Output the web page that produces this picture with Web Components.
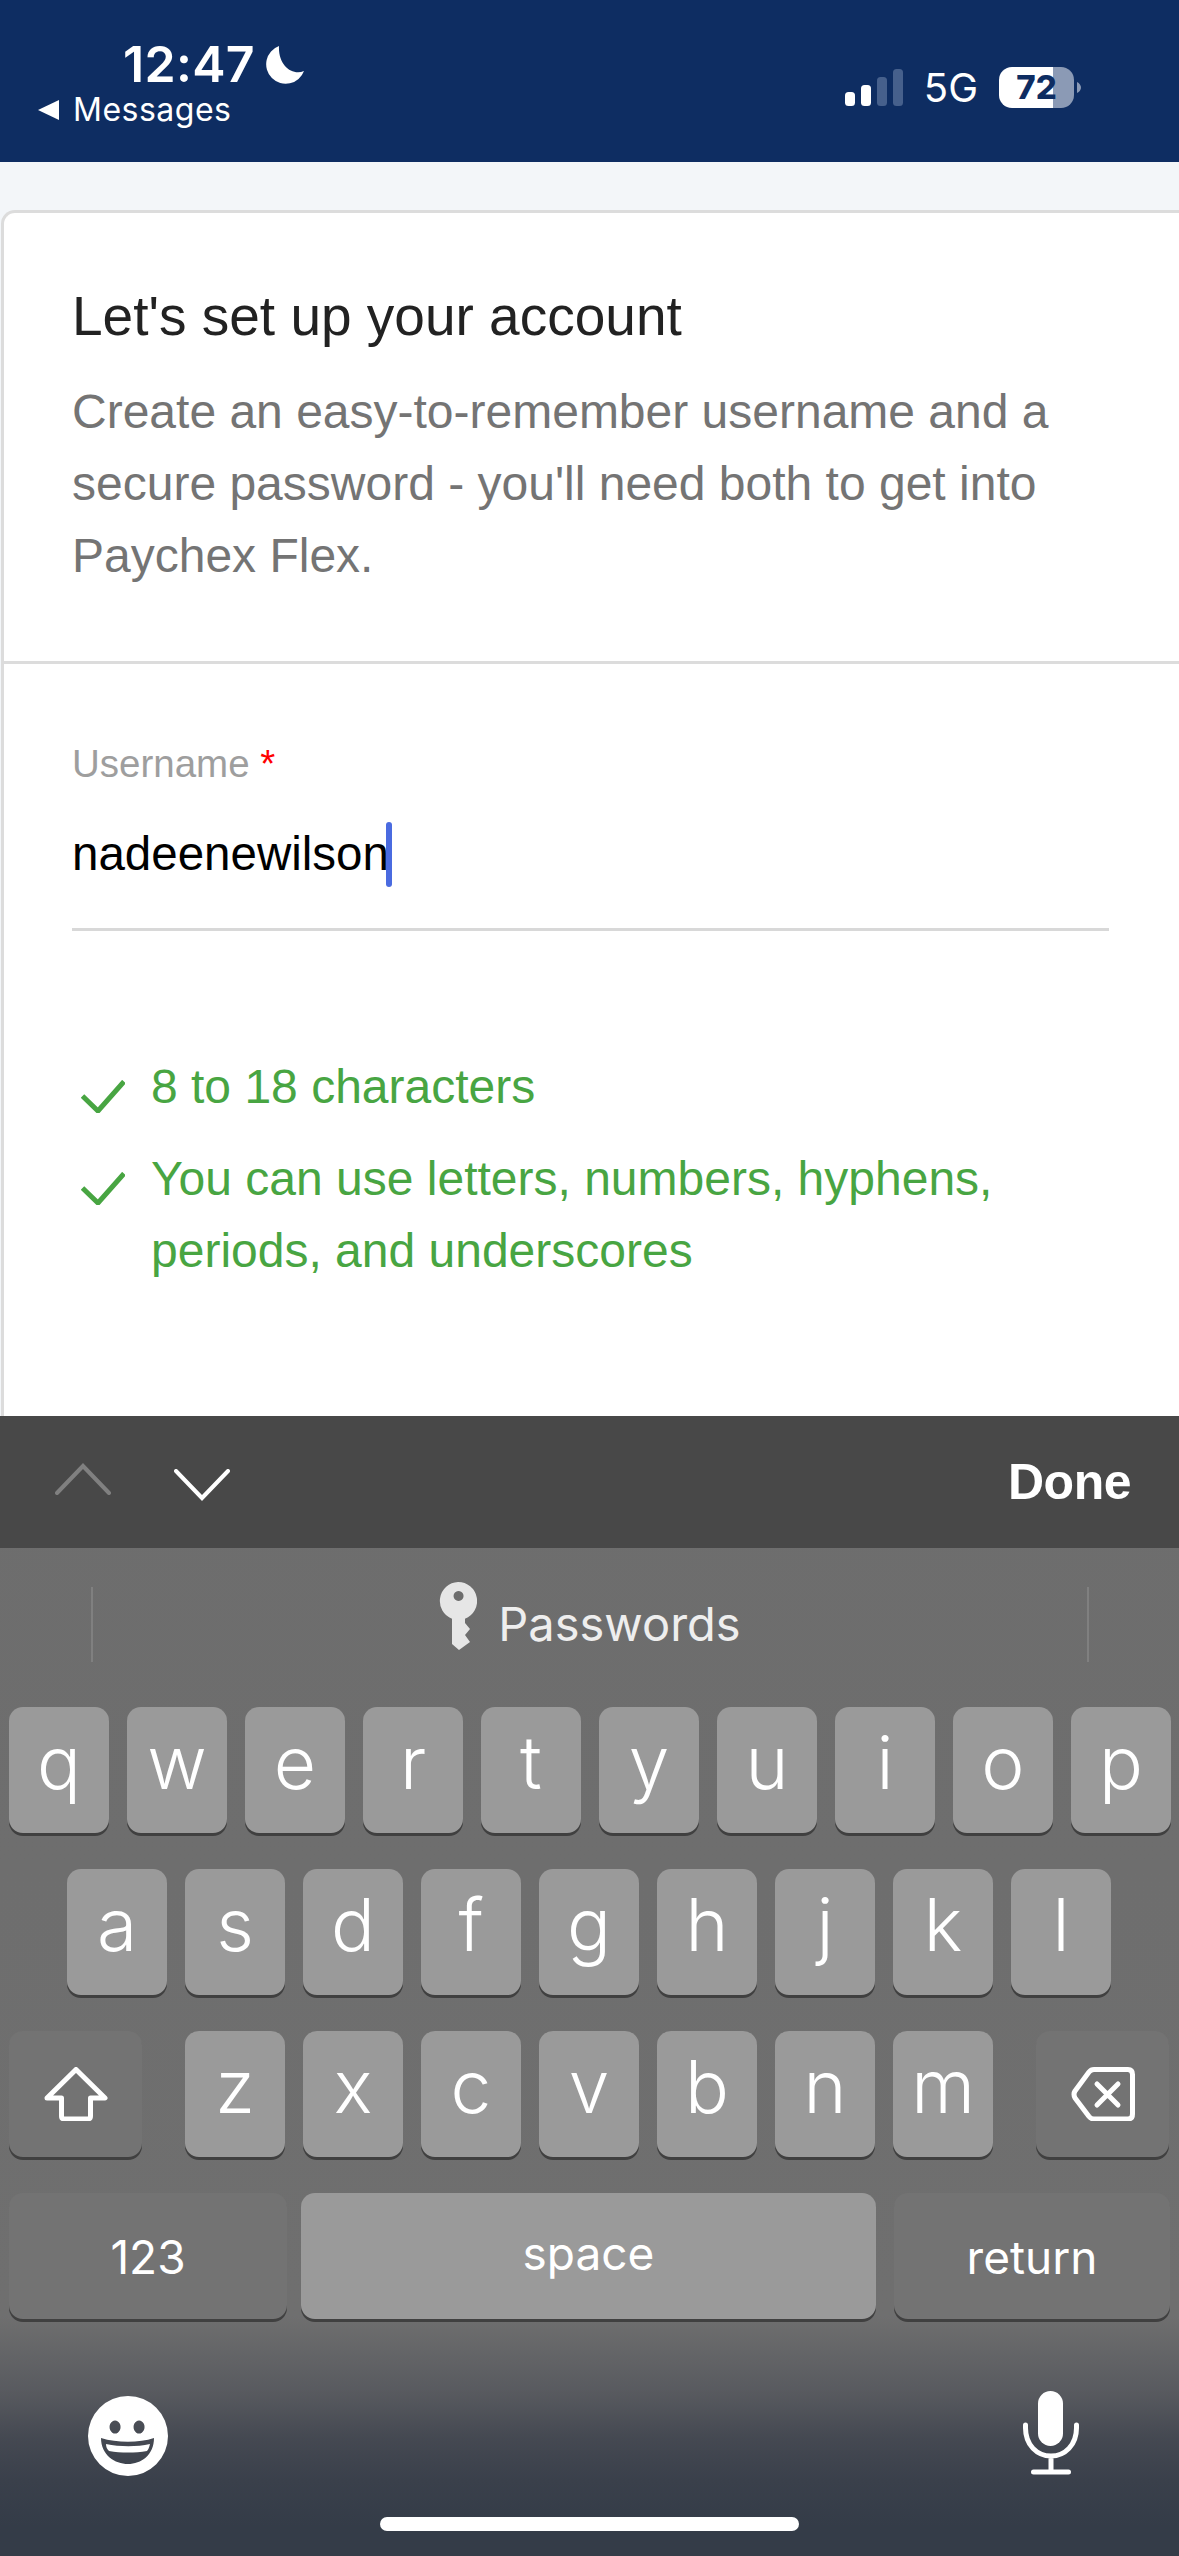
<!DOCTYPE html>
<html>
<head>
<meta charset="utf-8">
<style>
  html, body { margin: 0; padding: 0; }
  body { width: 1179px; height: 2556px; overflow: hidden; font-family: "Liberation Sans", Arial, sans-serif; display: flex; flex-direction: column; background: #f3f6f9; }
</style>
</head>
<body>
<status-bar></status-bar>
<account-card>
  <rule-item>8 to 18 characters</rule-item>
  <rule-item>You can use letters, numbers, hyphens, periods, and underscores</rule-item>
</account-card>
<key-board></key-board>

<script>
class StatusBar extends HTMLElement {
  constructor() {
    super();
    this.shadowDOM = this.attachShadow({mode: 'open'});
    this.shadowDOM.innerHTML = `
      <style>
        :host { display: flex; justify-content: space-between; flex: none; height: 162px; background: #0e2d62; color: #fff; font-family: Inter, sans-serif; }
        .left { padding: 39px 0 0 38px; }
        .time { display: flex; align-items: center; gap: 11px; padding-left: 85px; font-size: 50px; line-height: 50px; font-weight: 600; letter-spacing: 0.3px; }
        .back { display: flex; align-items: center; gap: 14px; margin-top: 3px; font-size: 32px; line-height: 36px; letter-spacing: 0.5px; }
        .right { display: flex; align-items: center; padding: 27px 98px 0 0; height: 60px; margin-top: 30px; gap: 21px; }
        .net { font-size: 40px; }
        .batt { display: block; width: 75px; height: 41px; border-radius: 13px; overflow: hidden; background: linear-gradient(90deg, #fff 0 54px, #8b9ab5 54px); color: #0e2d62; font-size: 33px; font-weight: 800; line-height: 41px; text-align: center; }
        .wrap { display: flex; align-items: center; gap: 3px; }
      </style>
      <div class="left">
        <div class="time">12:47
          <svg width="38" height="39" viewBox="0 0 38 39"><path d="M13 1A19.5 19.5 0 1 0 38 26C26 31 12 20 13 1Z" fill="#fff"/></svg>
        </div>
        <div class="back">
          <svg width="21" height="20" viewBox="0 0 21 20"><path d="M21 0V20L0 10Z" fill="#fff"/></svg>
          <span>Messages</span>
        </div>
      </div>
      <div class="right">
        <svg width="58" height="37" viewBox="0 0 58 37">
          <rect x="0" y="23" width="10" height="14" rx="3.5" fill="#fff"/>
          <rect x="16" y="16" width="10" height="21" rx="3.5" fill="#fff"/>
          <rect x="32" y="8" width="10" height="29" rx="3.5" fill="#46608c"/>
          <rect x="48" y="0" width="10" height="37" rx="3.5" fill="#46608c"/>
        </svg>
        <span class="net">5G</span>
        <span class="wrap">
          <span class="batt">72</span>
          <svg width="4" height="11" viewBox="0 0 4 11"><path d="M0 0C2.500 1 4 3.500 4 5.500S2.500 10 0 11Z" fill="#8b9ab5"/></svg>
        </span>
      </div>
    `;
  }
}

class AccountCard extends HTMLElement {
  constructor() {
    super();
    this.shadowDOM = this.attachShadow({mode: 'open'});
    this.shadowDOM.innerHTML = `
      <style>
        :host { display: block; flex: 1; min-height: 0; overflow: hidden; padding: 48px 0 0 1px; font-family: "Liberation Sans", Arial, sans-serif; }
        .card { box-sizing: border-box; height: 1400px; background: #fff; border: 3px solid #dcdcdc; border-right: 0; border-top-left-radius: 14px; }
        .head { height: 451px; box-sizing: border-box; padding: 73px 68px 0; border-bottom: 3px solid #dcdcdc; }
        h1 { margin: 0; font-size: 55px; line-height: 60px; font-weight: 400; color: #222; }
        p { margin: 30px 0 0; font-size: 48px; line-height: 72px; color: #747474; }
        .form { padding: 78px 70px 0 68px; }
        .lab { font-size: 38.500px; line-height: 44px; color: #9e9e9e; }
        .lab b { color: #f00; font-weight: 400; }
        .input { display: flex; align-items: center; height: 60px; margin-top: 38px; font-size: 47.500px; line-height: 60px; color: #000; }
        .caret { width: 6px; height: 65px; margin-left: -3px; border-radius: 3px; background: #4a6be0; }
        .line { height: 3px; margin-top: 44px; background: #d8d8d8; }
        .rules { display: flex; flex-direction: column; gap: 20px; margin-top: 120px; }
      </style>
      <div class="card">
        <div class="head">
          <h1>Let's set up your account</h1>
          <p>Create an easy-to-remember username and a secure password - you'll need both to get into Paychex Flex.</p>
        </div>
        <div class="form">
          <div class="lab">Username <b>*</b></div>
          <div class="input"><span>nadeenewilson</span><span class="caret"></span></div>
          <div class="line"></div>
          <div class="rules"><slot></slot></div>
        </div>
      </div>
    `;
  }
}

class RuleItem extends HTMLElement {
  constructor() {
    super();
    this.shadowDOM = this.attachShadow({mode: 'open'});
    this.shadowDOM.innerHTML = `
      <style>
        :host { display: flex; gap: 26px; color: #48a542; font-size: 48px; line-height: 72px; font-family: "Liberation Sans", Arial, sans-serif; }
        svg { flex: none; margin: 29px 0 0 9px; }
        div { width: 880px; }
      </style>
      <svg width="44" height="33" viewBox="0 0 44 33"><path d="M1.500 16L17 31L43 1.500" fill="none" stroke="#48a542" stroke-width="5"/></svg>
      <div><slot></slot></div>
    `;
  }
}

class KbKey extends HTMLElement {
  constructor() {
    super();
    this.shadowDOM = this.attachShadow({mode: 'open'});
    this.shadowDOM.innerHTML = `
      <style>
        :host { display: flex; align-items: center; justify-content: center; box-sizing: border-box; flex: none; width: 100px; height: 126px; padding-bottom: 16px; border-radius: 14px; background: #9a9a9a; box-shadow: 0 3px 0 #404040; color: #fff; font: 300 73px/1 Inter, sans-serif; }
        :host([dark]) { background: #737373; padding-bottom: 0; }
        :host([word]) { font: 400 46px/1 Inter, sans-serif; padding: 1px 0 0; }
      </style>
      <slot></slot>
    `;
  }
}

class KeyBoard extends HTMLElement {
  constructor() {
    super();
    this.shadowDOM = this.attachShadow({mode: 'open'});
    const row = s => [...s].map(c => `<kb-key>${c}</kb-key>`).join('');
    this.shadowDOM.innerHTML = `
      <style>
        :host { display: block; flex: none; height: 1140px; font-family: Inter, sans-serif; color: #fff; background: linear-gradient(#6d6d6d 0, #6f6f6f 900px, #585a5f 976px, #454952 1021px, #3a404b 1065px, #343c48 1110px); }
        .bar { display: flex; align-items: center; justify-content: space-between; box-sizing: border-box; height: 132px; padding: 0 48px 0 55px; background: #484848; font-family: "Liberation Sans", Arial, sans-serif; }
        .arrows { display: flex; gap: 63px; }
        .arrows svg:last-child { margin-top: 6px; }
        .done { font-size: 50px; font-weight: 700; letter-spacing: -0.5px; }
        .sug { display: flex; align-items: center; justify-content: space-between; box-sizing: border-box; height: 159px; padding: 0 90px 6px 91px; color: #eee; }
        .sep { width: 2px; height: 75px; background: #808080; }
        .pw { display: flex; align-items: flex-start; gap: 21px; margin-bottom: 18px; font-size: 47px; line-height: 52px; }
        .pw span { margin-top: 16px; }
        .rows { display: flex; flex-direction: column; gap: 36px; padding: 0 9px; }
        .row { display: flex; gap: 18px; }
        .r2 { padding-left: 58px; }
        .sh { width: 133px; margin-right: 25px; }
        .bs { width: 133px; margin-left: 25px; }
        .n { width: 278px; margin-right: -4px; }
        .sp { width: 575px; padding: 0 0 6px; }
        .rt { width: 276px; }
        .bot { display: flex; justify-content: space-between; align-items: flex-start; padding: 76px 100px 0 87px; }
        .mic { margin-top: -4px; }
        .home { width: 419px; height: 14px; margin: 40px auto 0; border-radius: 7px; background: #fff; }
      </style>
      <div class="bar">
        <div class="arrows">
          <svg width="56" height="32" viewBox="0 0 56 32"><path d="M2 30L28 3L54 30" fill="none" stroke="#808080" stroke-width="4" stroke-linecap="round"/></svg>
          <svg width="56" height="32" viewBox="0 0 56 32"><path d="M2 2L28 29L54 2" fill="none" stroke="#fff" stroke-width="4" stroke-linecap="round"/></svg>
        </div>
        <span class="done">Done</span>
      </div>
      <div class="sug">
        <span class="sep"></span>
        <span class="pw">
          <svg width="38" height="68" viewBox="0 0 38 68"><path fill-rule="evenodd" d="M19 0A19 19 0 0 1 26 36.700V41L31 47L26 53L31 60L20 68L13 62V36.700A19 19 0 0 1 19 0ZM19.500 9A5 5 0 1 0 19.600 9Z" fill="#e6e6e6"/></svg>
          <span>Passwords</span>
        </span>
        <span class="sep"></span>
      </div>
      <div class="rows">
        <div class="row">${row('qwertyuiop')}</div>
        <div class="row r2">${row('asdfghjkl')}</div>
        <div class="row">
          <kb-key dark class="sh">
            <svg width="64" height="54" viewBox="0 0 64 54"><path d="M32 2.500L61 31H46.500V49Q46.500 52 43.500 52H20.500Q17.500 52 17.500 49V31H3Z" fill="none" stroke="#fff" stroke-width="5" stroke-linejoin="round"/></svg>
          </kb-key>
          ${row('zxcvbnm')}
          <kb-key dark class="bs">
            <svg width="64" height="54" viewBox="0 0 64 54"><path d="M23 2.500H57Q61.500 2.500 61.500 7.500V47Q61.500 52 57 52H23Q20 52 18 49.500L4 31Q2 27 4 24L18 5Q20 2.500 23 2.500Z" fill="none" stroke="#fff" stroke-width="5" stroke-linejoin="round"/><path d="M26 17L47 38M47 17L26 38" stroke="#fff" stroke-width="5" stroke-linecap="round"/></svg>
          </kb-key>
        </div>
        <div class="row">
          <kb-key dark word class="n">123</kb-key>
          <kb-key word class="sp">space</kb-key>
          <kb-key dark word class="rt">return</kb-key>
        </div>
      </div>
      <div class="bot">
        <svg width="82" height="82" viewBox="0 0 82 82"><path fill-rule="evenodd" d="M41 1A40 40 0 1 1 41 81A40 40 0 1 1 41 1ZM28 25.500A5.500 6.500 0 1 0 28.100 25.500ZM52 25.500A5.500 6.500 0 1 0 52.100 25.500ZM14 43C30 48 52 48 67 43C67 60 54 69 41 69C28 69 14 60 14 43ZM19 49C33 52 50 52 63 49C62 53 61 55 60 56C48 58 34 58 22 56C20 54 19 52 19 49Z" fill="#fff"/></svg>
        <svg class="mic" width="56" height="84" viewBox="0 0 56 84"><rect x="15" y="0" width="25" height="55" rx="12.500" fill="#fff"/><path d="M2.500 34V37C2.500 54 14 65 28 65S53.500 54 53.500 37V34M28 65V81M10.500 81H45.500" fill="none" stroke="#fff" stroke-width="5" stroke-linecap="round"/></svg>
      </div>
      <div class="home"></div>
    `;
  }
}

customElements.define('status-bar', StatusBar);
customElements.define('account-card', AccountCard);
customElements.define('rule-item', RuleItem);
customElements.define('kb-key', KbKey);
customElements.define('key-board', KeyBoard);
</script>
</body>
</html>
